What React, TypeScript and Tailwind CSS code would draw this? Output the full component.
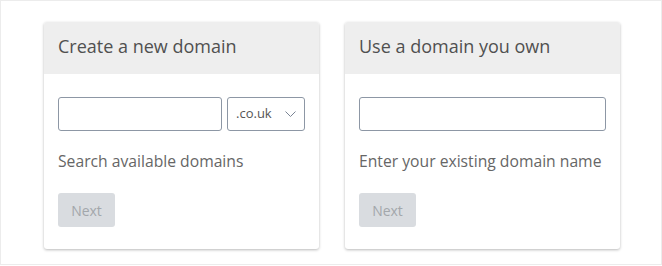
import React from "react";

function Card({ title, children, hint }: { title: string; children: React.ReactNode; hint: string }) {
  return (
    <div className="w-[275px] rounded-[3px] bg-white shadow-[0_1px_3px_rgba(0,0,0,0.28)] overflow-hidden">
      <div className="h-[52px] bg-[#eeeeee] px-[14px] pt-[12px]">
        <h2 className="text-[18px] leading-[24px] text-[#505050]">{title}</h2>
      </div>
      <div className="px-[14px] pt-[23px] pb-[22px]">
        {children}
        <p className="mt-[18px] whitespace-nowrap text-[15.7px] leading-[24px] text-[#666666]">{hint}</p>
        <button
          disabled
          className="mt-[20px] h-[34px] w-[57px] rounded-[3px] bg-[#d9dce0] text-[14px] text-[#a3a7ab]"
        >
          Next
        </button>
      </div>
    </div>
  );
}

export default function App() {
  return (
    <div
      className="w-[662px] h-[265px] border border-[#ececec] bg-white pl-[43px] pt-[21px] flex gap-[26px]"
      style={{ fontFamily: '"Open Sans", "Noto Sans", sans-serif' }}
    >
      <div className="flex gap-[26px] items-start">
        <Card title="Create a new domain" hint="Search available domains">
          <div className="flex gap-[5px]">
            <input className="h-[34px] w-[164px] rounded-[3px] border border-[#8d97a5] outline-none" />
            <div className="h-[34px] w-[79px] rounded-[3px] border border-[#8d97a5] flex items-center justify-between pl-[8px] pr-[8px]">
              <span className="text-[13px] text-[#555555]">.co.uk</span>
              <svg width="11" height="6" viewBox="0 0 11 6" fill="none">
                <path d="M0.5 0.5l5 5 5-5" stroke="#7a8494" strokeWidth="1" />
              </svg>
            </div>
          </div>
        </Card>
        <Card title="Use a domain you own" hint="Enter your existing domain name">
          <input className="h-[34px] w-full rounded-[3px] border border-[#8d97a5] outline-none block" />
        </Card>
      </div>
    </div>
  );
}
